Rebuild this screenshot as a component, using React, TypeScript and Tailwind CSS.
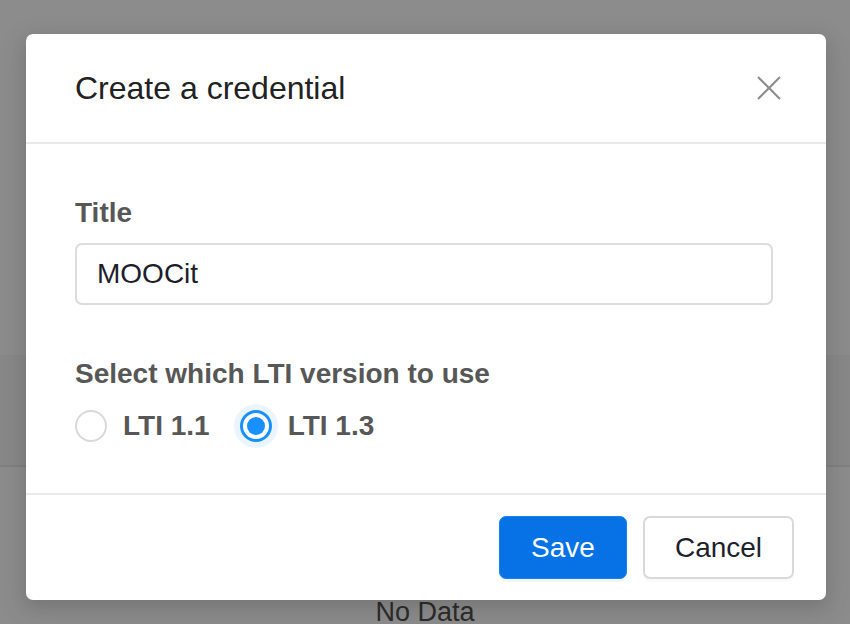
import { useState } from "react";

function CloseIcon() {
  return (
    <svg width="24" height="24" viewBox="0 0 24 24" fill="none" stroke="#8c8c8c" strokeWidth="2">
      <line x1="1" y1="1" x2="23" y2="23" />
      <line x1="23" y1="1" x2="1" y2="23" />
    </svg>
  );
}

function Radio({ label, checked, onClick }: { label: string; checked: boolean; onClick: () => void }) {
  return (
    <button type="button" onClick={onClick} className="flex items-center gap-[16px]">
      {checked ? (
        <span className="flex h-[32px] w-[32px] items-center justify-center rounded-full border-[3px] border-[#1890ff] bg-white shadow-[0_0_0_6px_#ebf5ff]">
          <span className="h-[18px] w-[18px] rounded-full bg-[#1890ff]" />
        </span>
      ) : (
        <span className="h-[32px] w-[32px] rounded-full border-[2.5px] border-[#d9d9d9] bg-white" />
      )}
      <span className="text-[28px] font-bold leading-[32px] text-[#575757]">{label}</span>
    </button>
  );
}

export default function App() {
  const [version, setVersion] = useState("1.3");

  return (
    <div className="relative h-[624px] w-[850px] overflow-hidden bg-white font-['Liberation_Sans',Arial,sans-serif]">
      {/* page behind the modal */}
      <div className="flex flex-col">
        <div className="h-[355px]" />
        <div className="h-[112px] border-b-2 border-[#ececec] bg-[#f8f8f8]" />
        <div className="mt-[129px] text-center text-[27px] leading-[32px] text-[#525252]">No Data</div>
      </div>

      {/* mask */}
      <div className="absolute inset-0 bg-black/45" />

      {/* modal */}
      <div className="absolute left-[26px] top-[34px] w-[800px] rounded-[7px] bg-white shadow-[0_6px_16px_rgba(0,0,0,0.1),0_9px_28px_8px_rgba(0,0,0,0.06)]">
        <div className="flex h-[110px] items-center justify-between border-b-2 border-[#e9e9e9] pl-[49px] pr-[45px]">
          <h2 className="text-[32px] leading-[40px] text-[#222222]">Create a credential</h2>
          <CloseIcon />
        </div>

        <div className="px-[49px] pt-[53px] pb-[51px]">
          <div className="text-[28px] font-bold leading-[32px] text-[#575757]">Title</div>
          <input
            defaultValue="MOOCit"
            className="mt-[14px] h-[62px] w-[698px] rounded-[7px] border-2 border-[#dcdcdc] px-[20px] text-[28px] text-[#1d1d2b] outline-none"
          />

          <div className="mt-[53px] text-[28px] font-bold leading-[32px] text-[#575757]">
            Select which LTI version to use
          </div>
          <div className="mt-[20px] flex items-center gap-[30px]">
            <Radio label="LTI 1.1" checked={version === "1.1"} onClick={() => setVersion("1.1")} />
            <Radio label="LTI 1.3" checked={version === "1.3"} onClick={() => setVersion("1.3")} />
          </div>
        </div>

        <div className="flex justify-end gap-[16px] border-t-2 border-[#e9e9e9] pt-[21px] pb-[21px] pr-[32px]">
          <button className="h-[63px] w-[128px] rounded-[7px] border border-[#1a82ef] bg-[#0672e6] text-[28px] text-white shadow-[0_3px_0_rgba(0,0,0,0.04)]">
            Save
          </button>
          <button className="h-[63px] w-[151px] rounded-[7px] border-2 border-[#d9d9d9] bg-white text-[28px] text-[#1f1f2f] shadow-[0_3px_0_rgba(0,0,0,0.02)]">
            Cancel
          </button>
        </div>
      </div>
    </div>
  );
}
